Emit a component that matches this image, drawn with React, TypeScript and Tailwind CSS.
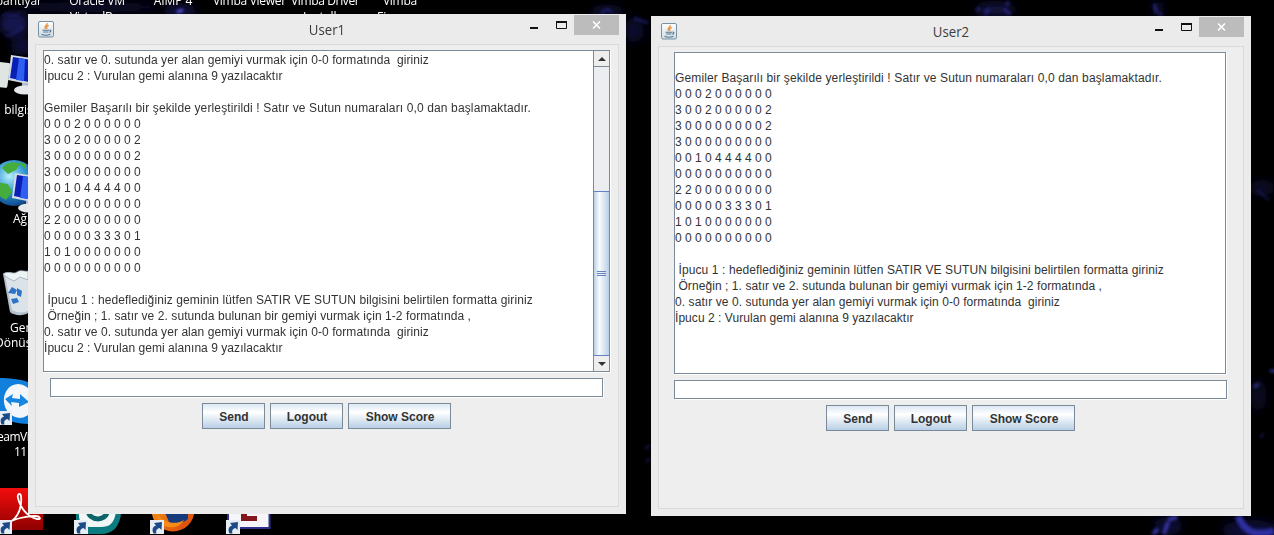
import React from "react";

type Line = { text: string; tracking?: string };

const board: Line[] = [
  "0 0 0 2 0 0 0 0 0 0",
  "3 0 0 2 0 0 0 0 0 2",
  "3 0 0 0 0 0 0 0 0 2",
  "3 0 0 0 0 0 0 0 0 0",
  "0 0 1 0 4 4 4 4 0 0",
  "0 0 0 0 0 0 0 0 0 0",
  "2 2 0 0 0 0 0 0 0 0",
  "0 0 0 0 0 3 3 3 0 1",
  "1 0 1 0 0 0 0 0 0 0",
  "0 0 0 0 0 0 0 0 0 0",
].map((text) => ({ text }));

const placed: Line = {
  text: "Gemiler Başarılı bir şekilde yerleştirildi ! Satır ve Sutun numaraları 0,0 dan başlamaktadır.",
  tracking: "tracking-[0.13px]",
};
const rowHint: Line = {
  text: "0. satır ve 0. sutunda yer alan gemiyi vurmak için 0-0 formatında  giriniz",
  tracking: "tracking-[0.073px]",
};
const hitHint: Line = {
  text: "İpucu 2 : Vurulan gemi alanına 9 yazılacaktır",
  tracking: "tracking-[0.05px]",
};
const hints: Line[] = [
  {
    text: " İpucu 1 : hedeflediğiniz geminin lütfen SATIR VE SUTUN bilgisini belirtilen formatta giriniz",
    tracking: "tracking-[0.11px]",
  },
  {
    text: " Örneğin ; 1. satır ve 2. sutunda bulunan bir gemiyi vurmak için 1-2 formatında ,",
    tracking: "tracking-[0.075px]",
  },
  rowHint,
  hitHint,
];
const blank: Line = { text: "" };

const user1Log: Line[] = [rowHint, hitHint, blank, placed, ...board, blank, ...hints];
const user2Log: Line[] = [blank, placed, ...board, blank, ...hints];

function JavaIcon() {
  return (
    <svg width="16" height="17" viewBox="0 0 16 17" className="block">
      <defs>
        <linearGradient id="javaBg" x1="0" y1="0" x2="0" y2="1">
          <stop offset="0" stopColor="#ffffff" />
          <stop offset="1" stopColor="#cfdbe3" />
        </linearGradient>
      </defs>
      <rect x=".5" y=".5" width="15" height="15.5" rx="1.5" fill="url(#javaBg)" stroke="#7790a2" />
      <path d="M9.300 2.200C9.700 4.200 5.700 4.800 7.300 8M10.700 4.400C8.700 5.200 8.200 6.200 9 8" fill="none" stroke="#e8892b" strokeWidth="1.200" />
      <path d="M4.500 9.200h6.500M5.200 11h5.200M11.500 9.200c2-.4 1.800 1.600-.3 2M3.500 13.300c2.500 1 6.500 1 8.800 0" fill="none" stroke="#54768f" strokeWidth="1.100" />
    </svg>
  );
}

function TitleBar({ title }: { title: string }) {
  return (
    <header className="relative flex h-[30px] shrink-0 items-start">
      <div className="mt-[7px] ml-[10px] w-4">
        <JavaIcon />
      </div>
      <h1 className="absolute inset-x-0 top-[4px] scale-x-[0.88] text-center font-['Open_Sans','Noto_Sans',sans-serif] text-[15px] leading-[22px] text-[#3c3c3c]">
        {title}
      </h1>
      <div className="mr-[7px] ml-auto flex items-start">
        <svg width="10" height="20" viewBox="0 0 10 20" className="mr-[17px]">
          <rect x="1" y="13" width="8" height="2" fill="#111" />
        </svg>
        <svg width="11" height="20" viewBox="0 0 11 20" className="mr-[7px]">
          <path d="M.5 7.500h10v7H.5z" fill="none" stroke="#111" />
          <path d="M0 8h11" stroke="#111" strokeWidth="2" />
        </svg>
        <button className="mt-px flex h-5 w-[45px] items-center justify-center bg-[#bcbcbc]">
          <svg width="9" height="8" viewBox="0 0 9 8">
            <path d="M1 .5l7 7M8 .5l-7 7" stroke="#fff" strokeWidth="1.500" />
          </svg>
        </button>
      </div>
    </header>
  );
}

function ScrollBar() {
  return (
    <div className="flex w-[16px] shrink-0 flex-col border-l border-[#7a8a99] bg-[#eeeeee]">
      <div className="flex h-[16px] items-center justify-center border-b border-[#7a8a99]">
        <svg width="8" height="4" viewBox="0 0 8 4">
          <path d="M4 0L8 4H0z" fill="#333" />
        </svg>
      </div>
      <div className="h-[124px] bg-[#ebedf0]" />
      <div className="flex flex-1 items-center justify-center border-y border-[#6382bf] bg-linear-to-r from-[#b8cfe5] via-[#fafcff] via-35% to-[#b8cfe5]">
        <div className="flex h-[5px] w-[9px] flex-col justify-between">
          <div className="h-px bg-[#6382bf]" />
          <div className="h-px bg-[#6382bf]" />
          <div className="h-px bg-[#6382bf]" />
        </div>
      </div>
      <div className="flex h-[15px] items-center justify-center">
        <svg width="8" height="4" viewBox="0 0 8 4">
          <path d="M0 0h8L4 4z" fill="#333" />
        </svg>
      </div>
    </div>
  );
}

function Log({ lines, scroll, className }: { lines: Line[]; scroll?: boolean; className: string }) {
  return (
    <div className={`flex h-[322px] border border-[#7a8a99] bg-white shadow-[1px_1px_0_#fff] ${className}`}>
      <div className="min-w-0 flex-1 overflow-hidden pt-px text-[12px] leading-4 text-[#333]">
        {lines.map((line, i) => (
          <div key={i} className={`h-4 whitespace-pre ${line.tracking ?? ""}`}>
            {line.text}
          </div>
        ))}
      </div>
      {scroll && <ScrollBar />}
    </div>
  );
}

function SwingButton({ label, className }: { label: string; className: string }) {
  return (
    <button
      className={`h-[26px] border border-[#7a8a99] bg-linear-to-b from-[#dde8f3] via-white via-35% to-[#b8cfe5] pt-px pl-px text-center text-[12px] leading-[24px] font-bold text-[#333] ${className}`}
    >
      {label}
    </button>
  );
}

function Controls({ className }: { className: string }) {
  return (
    <div className={`mt-[6px] flex gap-[5px] ${className}`}>
      <SwingButton label="Send" className="w-[63px]" />
      <SwingButton label="Logout" className="w-[73px]" />
      <SwingButton label="Show Score" className="w-[103px]" />
    </div>
  );
}

function ShortcutArrow({ x, y }: { x: number; y: number }) {
  return (
    <g transform={`translate(${x} ${y})`}>
      <rect width="14" height="14" fill="#e6edf3" />
      <path d="M3.500 13.500C1.500 9 3 6.500 6 5.500L4 3l8-1-.5 8-2-2C7 8.500 5.500 10.500 6.500 13.500z" fill="#1d4a86" />
    </g>
  );
}

function Monitor({ x, y }: { x: number; y: number }) {
  return (
    <g transform={`translate(${x} ${y})`}>
      <path d="M1 0l27 4v27L-2 25z" fill="#d4dce6" />
      <path d="M3 2l25 4v23L0 23z" fill="#0a1fb4" />
      <path d="M9 3l6 1-1 22-8-1z" fill="#2f5ff0" />
      <path d="M12 28h9l1 5h-10z" fill="#b5bcc4" />
      <ellipse cx="15" cy="35" rx="11" ry="4.500" fill="#e6e9ec" />
    </g>
  );
}

function Wallpaper() {
  return (
    <svg width="1274" height="535" viewBox="0 0 1274 535" className="absolute inset-0">
      <defs>
        <filter id="glow" x="-50%" y="-50%" width="200%" height="200%">
          <feGaussianBlur stdDeviation="4" />
        </filter>
        <filter id="soft" x="-50%" y="-50%" width="200%" height="200%">
          <feGaussianBlur stdDeviation="1.600" />
        </filter>
        <linearGradient id="adobe" x1="0" y1="0" x2="0" y2="1">
          <stop offset="0" stopColor="#f30d0d" />
          <stop offset="1" stopColor="#8f0000" />
        </linearGradient>
        <radialGradient id="globe" cx=".4" cy=".35" r=".7">
          <stop offset="0" stopColor="#b8f0ff" />
          <stop offset=".5" stopColor="#2f94cf" />
          <stop offset="1" stopColor="#0a3f85" />
        </radialGradient>
        <linearGradient id="fox" x1="0" y1="0" x2="1" y2="1">
          <stop offset="0" stopColor="#f6a21b" />
          <stop offset="1" stopColor="#d9420b" />
        </linearGradient>
      </defs>
      <rect width="1274" height="535" fill="#000" />
      <g filter="url(#glow)" fill="#15154f">
        <ellipse cx="14" cy="24" rx="15" ry="12" />
        <ellipse cx="22" cy="46" rx="11" ry="9" opacity=".7" />
        <ellipse cx="10" cy="70" rx="8" ry="5" opacity=".4" />
        <ellipse cx="90" cy="7" rx="70" ry="5" opacity=".6" />
        <ellipse cx="180" cy="11" rx="16" ry="5" />
        <ellipse cx="607" cy="12" rx="16" ry="5" opacity=".8" />
        <ellipse cx="634" cy="30" rx="10" ry="12" opacity=".6" />
        <ellipse cx="995" cy="10" rx="20" ry="7" opacity=".8" />
        <ellipse cx="1158" cy="9" rx="6" ry="8" opacity=".6" />
        <ellipse cx="1258" cy="395" rx="9" ry="16" opacity=".4" />
        <ellipse cx="1262" cy="188" rx="12" ry="8" opacity=".5" />
        <ellipse cx="1250" cy="530" rx="28" ry="10" opacity=".7" />
        <ellipse cx="1168" cy="526" rx="14" ry="9" opacity=".7" />
      </g>
      <g filter="url(#soft)" fill="none" stroke="#29298c" strokeWidth="2">
        <path d="M2 16c6-5 10 3 18-3M6 36c8 0 12-6 17-10" opacity=".5" />
        <path d="M177 12l6-2" stroke="#5555d4" strokeWidth="3" />
        <path d="M601 13l6-4 5 3M634 18l14 5" opacity=".8" />
        <path d="M977 10l3-1M985 14l4-5M1006 5l3-3M1004 9l6 5" strokeWidth="3" opacity=".9" />
        <path d="M1154 4l3 9M1159 14l3 1" strokeWidth="3" opacity=".8" />
        <path d="M1257 190l12 10" opacity=".5" />
        <path d="M1254 387l5-3M1270 371h6" stroke="#3a3ab8" strokeWidth="3" opacity=".8" />
        <path d="M1260 438l4-5" opacity=".6" />
        <path d="M1238 516c6 15 16 21 36 15" stroke="#2d2da0" strokeWidth="7" />
        <path d="M1168 520l9-3M1153 534l5-5M1164 534l4-12" stroke="#34349f" strokeWidth="4" />
        <path d="M645 449l5-4M646 462l4-3" opacity=".6" />
      </g>

      <rect x="-8" y="62" width="17" height="25" rx="2" fill="#dfe5e2" transform="rotate(8 0 74)" />
      <Monitor x={10} y={55} />

      <circle cx="14" cy="183" r="23" fill="url(#globe)" />
      <path d="M2 168c6-8 14-6 18-4l-4 6-8 4zM-4 182l12 2 4 8-6 8-10-6zM18 162l8 2v6z" fill="#45ad3b" />
      <Monitor x={14} y={173} />

      <path d="M3 274l7 38c4 4 14 4 18 1v-40z" fill="#b4bfc9" />
      <path d="M5 276l7 34c4 3 12 3 16 1v-34z" fill="#dbe3e9" />
      <path d="M3 274c6-4 10 1 14-2s8 0 11-1v9l-8-3-6 4-6-3z" fill="#eef3f6" stroke="#939fa9" strokeWidth=".7" />
      <path d="M8 293l4-6 5 3-2 4zM17 288l5 3-1 6-4-2zM11 299l6-1 2 4-6 2z" fill="#2e72c9" />

      <path d="M0 378c9 0 20 1 28 4v42c-9 0-18-3-28-5z" fill="#1180dc" />
      <ellipse cx="19" cy="401" rx="15" ry="17" fill="#f4f7fa" transform="rotate(-14 19 401)" />
      <path d="M5 399l8-5-1 4 8 1v-5l9 8-10 5v-4l-8-1 1 4z" fill="#1686e0" />
      <ShortcutArrow x={-2} y={411} />

      <rect x="0" y="488" width="43" height="42" fill="url(#adobe)" />
      <path d="M8 523C20 518 22 504 21 496c-1-4-4-2-3 2 2 9 9 19 19 21 5 1 3-3-2-3-9 0-21 3-27 7z" fill="none" stroke="#fff" strokeWidth="1.800" />
      <ShortcutArrow x={-2} y={520} />

      <path d="M76 500h45v14c-2 14-9 20-20 20H88c-8 0-12-6-12-14z" fill="#0d7c80" />
      <path d="M79 500h37v12c-2 12-7 15-15 15H90c-8 0-11-5-11-12z" fill="#f1f7f7" />
      <path d="M88 510c1 12 18 11 19 2" fill="none" stroke="#0d6468" strokeWidth="5" />
      <ShortcutArrow x={74} y={520} />

      <circle cx="173" cy="510" r="21.500" fill="url(#fox)" />
      <path d="M163 508h25v11c-5 5-14 6-19 3z" fill="#173a7c" />
      <path d="M156 512c5 10 18 14 28 8-4 8-16 10-24 3z" fill="#f68b17" />
      <ShortcutArrow x={150} y={520} />

      <rect x="228" y="486" width="41.500" height="42" fill="#f6f6fa" stroke="#31318c" strokeWidth="2" />
      <path d="M241 510h6v6h10v5h-16z" fill="#84171e" />
      <ShortcutArrow x={226} y={520} />
    </svg>
  );
}

const labels = [
  { text: "bahtiyar", pos: "left-[-60px] top-[-7px] w-[102px] text-right" },
  { text: "Oracle VM", pos: "left-[47px] top-[-7px] w-[100px] text-center tracking-[-0.2px]" },
  { text: "VirtualB", pos: "left-[70px] top-[9px] w-[60px] text-left tracking-[-0.2px]" },
  { text: "AIMP 4", pos: "left-[123px] top-[-7px] w-[100px] text-center tracking-[-0.1px]" },
  { text: "Vimba Viewer", pos: "left-[213px] top-[-7px] w-[76px] text-left tracking-[-0.28px]" },
  { text: "Vimba Driver", pos: "left-[291px] top-[-7px] w-[72px] text-left tracking-[-0.36px]" },
  { text: "Installer", pos: "left-[303px] top-[9px] w-[50px] text-left" },
  { text: "Vimba", pos: "left-[383px] top-[-7px] w-[40px] text-left tracking-[-0.3px]" },
  { text: "Fire", pos: "left-[377px] top-[9px] w-[40px] text-left" },
  { text: "ı bilgis", pos: "left-[-2px] top-[102px] w-[50px] text-left" },
  { text: "Ağ", pos: "left-[13px] top-[211px] w-[30px] text-left" },
  { text: "Geri", pos: "left-[10px] top-[320px] w-[40px] text-left" },
  { text: "Dönüş", pos: "left-[-5px] top-[335px] w-[50px] text-left" },
  { text: "eamVie", pos: "left-[-3px] top-[429px] w-[50px] text-left tracking-[-0.5px]" },
  { text: "11", pos: "left-[14px] top-[444px] w-[30px] text-left tracking-[-0.5px]" },
];

export default function App() {
  return (
    <main className="relative h-[535px] w-[1274px] overflow-hidden bg-black font-['Liberation_Sans',Arial,sans-serif]">
      <Wallpaper />
      {labels.map((l) => (
        <span
          key={l.text}
          className={`absolute font-['Open_Sans','Noto_Sans',sans-serif] text-[12px] leading-4 whitespace-nowrap text-white ${l.pos}`}
        >
          {l.text}
        </span>
      ))}

      <section className="absolute top-[14px] left-[28px] flex h-[500px] w-[598px] flex-col bg-[#ebebeb] px-[7px] pb-[7px]">
        <div className="-mx-[7px]">
          <TitleBar title="User1" />
        </div>
        <div className="flex min-h-0 flex-1 flex-col border border-[#dadada] bg-[#eeeeee]">
          <Log lines={user1Log} scroll className="mt-[5px] ml-[7px] w-[567px]" />
          <input
            aria-label="User1"
            className="mt-[6px] ml-[14px] h-[19px] w-[553px] shrink-0 border border-[#7a8a99] bg-white shadow-[1px_1px_0_#fff]"
          />
          <Controls className="ml-[166px]" />
        </div>
      </section>

      <section className="absolute top-[16px] left-[651px] flex h-[500px] w-[600px] flex-col bg-[#ebebeb] px-[7px] pb-[7px]">
        <div className="-mx-[7px]">
          <TitleBar title="User2" />
        </div>
        <div className="flex min-h-0 flex-1 flex-col border border-[#dadada] bg-[#eeeeee]">
          <Log lines={user2Log} className="mt-[5px] ml-[15px] w-[552px]" />
          <input
            aria-label="User2"
            className="mt-[6px] ml-[15px] h-[19px] w-[553px] shrink-0 border border-[#7a8a99] bg-white shadow-[1px_1px_0_#fff]"
          />
          <Controls className="ml-[167px]" />
        </div>
      </section>
    </main>
  );
}
